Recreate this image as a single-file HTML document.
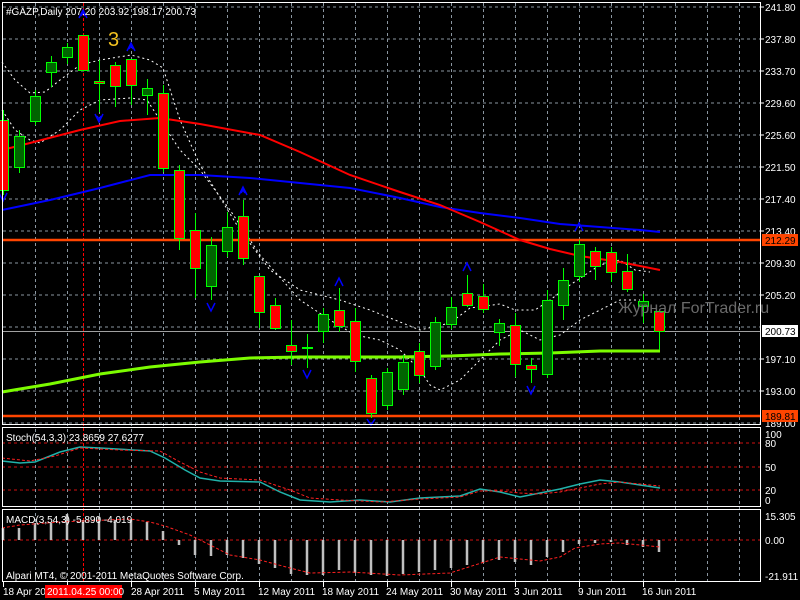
<!DOCTYPE html>
<html><head><meta charset="utf-8"><style>
body{margin:0;background:#000;width:800px;height:600px;overflow:hidden}
svg{display:block}
text{font-family:"Liberation Sans","DejaVu Sans",sans-serif;font-size:10px;fill:#fff}
</style></head><body>
<svg width="800" height="600" viewBox="0 0 800 600">
<g stroke="#8a96a0" stroke-dasharray="3,3" stroke-width="1">
<path d="M3 7H760M3 39H760M3 71H760M3 103H760M3 135H760M3 167H760M3 199H760M3 231H760M3 263H760M3 295H760M3 327H760M3 359H760M3 391H760M3 423H760"/>
<path d="M35.5 3V582M67.5 3V582M99.5 3V582M131.5 3V582M163.5 3V582M195.5 3V582M227.5 3V582M259.5 3V582M291.5 3V582M323.5 3V582M355.5 3V582M387.5 3V582M419.5 3V582M451.5 3V582M483.5 3V582M515.5 3V582M547.5 3V582M579.5 3V582M611.5 3V582M643.5 3V582M675.5 3V582M707.5 3V582M739.5 3V582"/>
</g>
<path d="M83.5 3V582" stroke="#ff0000" stroke-dasharray="3,2"/>
<path d="M2 240H760M2 416H760" stroke="#ff4500" stroke-width="2.5"/>
<path d="M2 331.5H760" stroke="#a0a0a0"/>
<g fill="none" stroke="#fff" stroke-dasharray="2,3">
<polyline points="2,62 15,80 30,93 45,92 60,80 80,65 100,60 131,55 150,60 163,68 180,120 200,165 240,230 270,270 300,290 340,300 355,305 370,310 400,322 420,330 450,323 470,308 485,306 500,304 515,310 535,310 550,300 570,285 600,265 620,260 635,270 650,272"/>
<polyline points="2,110 15,130 30,140 40,143 60,130 80,110 100,100 130,98 147,100 160,120 180,150 200,170 230,210 260,255 300,300 330,320 355,335 380,340 400,350 420,370 430,385 440,390 460,380 480,360 500,340 520,330 540,340 560,335 580,320 600,310 620,300 640,300"/>
</g>
<polyline fill="none" stroke="#0000ff" stroke-width="2" points="2,210 50,200 100,188 150,175 200,175 250,178 300,183 350,188 400,198 440,207 480,213 520,218 560,224 600,227 640,230 660,232"/>
<polyline fill="none" stroke="#ff0000" stroke-width="2" points="2,150 30,143 80,130 120,121 160,118 200,124 260,135 300,152 350,175 400,192 440,205 480,222 520,240 550,249 580,256 620,262 660,270"/>
<polyline fill="none" stroke="#7cfc00" stroke-width="3" points="2,392 50,384 100,374 150,367 200,362 250,358 300,357 350,357 400,357 450,356 500,354 550,353 600,351 640,351 660,351"/>
<path d="M659.5 351V331" stroke="#7cfc00"/>
<g stroke="#00ff00" stroke-width="1">
<path d="M3.5 110V195M19.5 130V173M35.5 90V125M51.5 56V87M67.5 43V64M83.5 35V70M99.5 60V112M115.5 62V107M131.5 59V105M147.5 79V115M163.5 85V172M179.5 165V250M195.5 213V298M211.5 237V300M227.5 212V257M243.5 200V265M259.5 276V328M275.5 298V330M291.5 320V365M307.5 334V368M323.5 308V343M339.5 288V332M355.5 308V372M371.5 375V418M387.5 368V410M403.5 355V395M419.5 343V383M435.5 317V370M451.5 297V329M467.5 275V307M483.5 284V313M499.5 319V346M515.5 313V377M531.5 358V383M547.5 290V378M563.5 268V320M579.5 240V282M595.5 247V280M611.5 247V282M627.5 254V292M643.5 294V323M659.5 311V350"/>
<g fill="#ff0000">
<rect x="-1.5" y="120.5" width="10" height="70"/><rect x="78.5" y="35.5" width="10" height="35"/><rect x="94.5" y="81.5" width="10" height="2"/><rect x="110.5" y="65.5" width="10" height="21"/><rect x="126.5" y="59.5" width="10" height="26"/><rect x="158.5" y="93.5" width="10" height="75"/><rect x="174.5" y="170.5" width="10" height="68"/><rect x="190.5" y="230.5" width="10" height="38"/><rect x="238.5" y="216.5" width="10" height="42"/><rect x="254.5" y="276.5" width="10" height="36"/><rect x="270.5" y="305.5" width="10" height="23"/><rect x="286.5" y="345.5" width="10" height="6"/><rect x="334.5" y="310.5" width="10" height="16"/><rect x="350.5" y="321.5" width="10" height="40"/><rect x="366.5" y="378.5" width="10" height="35"/><rect x="414.5" y="351.5" width="10" height="24"/><rect x="462.5" y="293.5" width="10" height="12"/><rect x="478.5" y="296.5" width="10" height="13"/><rect x="510.5" y="325.5" width="10" height="39"/><rect x="526.5" y="365.5" width="10" height="4"/><rect x="590.5" y="251.5" width="10" height="15"/><rect x="606.5" y="252.5" width="10" height="20"/><rect x="622.5" y="271.5" width="10" height="18"/><rect x="654.5" y="311.5" width="10" height="20"/>
</g>
<g fill="#006400">
<rect x="14.5" y="136.5" width="10" height="31"/><rect x="30.5" y="96.5" width="10" height="25"/><rect x="46.5" y="62.5" width="10" height="10"/><rect x="62.5" y="47.5" width="10" height="10"/><rect x="142.5" y="88.5" width="10" height="7"/><rect x="206.5" y="245.5" width="10" height="41"/><rect x="222.5" y="227.5" width="10" height="24"/><rect x="302.5" y="347.5" width="10" height="1"/><rect x="318.5" y="314.5" width="10" height="17"/><rect x="382.5" y="372.5" width="10" height="33"/><rect x="398.5" y="362.5" width="10" height="27"/><rect x="430.5" y="322.5" width="10" height="44"/><rect x="446.5" y="307.5" width="10" height="17"/><rect x="494.5" y="323.5" width="10" height="9"/><rect x="542.5" y="300.5" width="10" height="74"/><rect x="558.5" y="280.5" width="10" height="25"/><rect x="574.5" y="244.5" width="10" height="32"/><rect x="638.5" y="301.5" width="10" height="5"/>
</g></g>
<g fill="none" stroke="#0000ff" stroke-width="1.5">
<path d="M79 18L83 10L87 18M81 16L83 13L85 16"/><path d="M127 51L131 43L135 51M129 49L131 46L133 49"/><path d="M239 195L243 187L247 195M241 193L243 190L245 193"/><path d="M335 286L339 278L343 286"/><path d="M463 271L467 263L471 271"/><path d="M575 231L579 223L583 231"/>
<path d="M-1 193L3 201L7 193"/><path d="M95 114L99 122L103 114M97 116L99 119L101 116"/><path d="M207 303L211 311L215 303"/><path d="M303 370L307 378L311 370"/><path d="M367 419L371 425L375 419"/><path d="M527 386L531 394L535 386"/>
</g>
<text x="108" y="46" style="font-size:20px;fill:#f0c020">3</text>
<text x="618" y="313" style="font-size:16px;fill:#6a6a6a">Журнал ForTrader.ru</text>
<text x="6" y="15">#GAZP,Daily  207.20 203.92 198.17 200.73</text>
<path d="M2 443H760M2 467H760M2 490H760" stroke="#d01010" stroke-dasharray="3,3"/>
<polyline fill="none" stroke="#20b2aa" stroke-width="1.5" points="2,461 20,463 35,462 60,452 80,447 100,448 150,451 165,458 185,470 200,478 220,481 260,482 280,492 300,500 330,502 360,500 390,502 420,498 460,496 480,489 500,492 520,497 540,493 560,489 580,484 600,480 620,482 640,485 660,488"/>
<polyline fill="none" stroke="#ff2020" stroke-dasharray="3,2" points="2,458 30,461 55,456 80,448 120,450 160,451 180,462 200,472 220,478 260,480 290,490 310,498 340,500 380,502 420,499 460,497 480,491 500,491 520,493 540,494 560,492 580,488 600,484 620,482 640,484 660,486"/>
<text x="6" y="441">Stoch(54,3,3) 23.8659 27.6277</text>
<path d="M2 540H760" stroke="#d01010" stroke-dasharray="3,3"/>
<g stroke="#c0c0c0" stroke-width="2.5">
<path d="M3 540V528M19 540V528M35 540V523M51 540V523M67 540V514M83 540V520M99 540V517M115 540V520M131 540V520M147 540V522M163 540V531M179 540V545M195 540V555M211 540V556M227 540V555M243 540V558M259 540V564M275 540V568M291 540V574M307 540V575M323 540V575M339 540V570M355 540V573M371 540V575M387 540V576M403 540V574M419 540V572M435 540V570M451 540V568M467 540V565M483 540V563M499 540V560M515 540V562M531 540V565M547 540V557M563 540V552M579 540V544M595 540V543M611 540V542M627 540V545M643 540V547M659 540V552"/>
</g>
<polyline fill="none" stroke="#ff2020" stroke-dasharray="3,2" points="2,528 20,525 60,522 130,519 150,522 165,526 190,535 230,555 260,560 290,568 310,573 350,572 400,575 450,573 500,557 540,561 560,557 575,548 600,544 620,543 640,545 660,547"/>
<text x="6" y="523">MACD(3,54,3) -5.890 -4.019</text>
<text x="6" y="579">Alpari MT4, © 2001-2011 MetaQuotes Software Corp.</text>
<g fill="none" stroke="#fff" stroke-width="1">
<rect x="2.5" y="2.5" width="758" height="422"/><rect x="2.5" y="427.5" width="758" height="79"/><rect x="2.5" y="509.5" width="758" height="72"/>
</g>
<g>
<text x="765" y="11">241.80</text><text x="765" y="43">237.80</text><text x="765" y="75">233.70</text><text x="765" y="107">229.60</text><text x="765" y="139">225.60</text><text x="765" y="171">221.50</text><text x="765" y="203">217.40</text><text x="765" y="235">213.40</text><text x="765" y="267">209.30</text><text x="765" y="299">205.20</text><text x="765" y="363">197.10</text><text x="765" y="395">193.00</text><text x="765" y="427">189.00</text>
<text x="765" y="438">100</text><text x="765" y="447">80</text><text x="765" y="471">50</text><text x="765" y="494">20</text><text x="765" y="504">0</text>
<text x="765" y="520">15.305</text><text x="765" y="544">0.00</text><text x="765" y="580">-21.911</text>
</g>
<path d="M760 7H764M760 39H764M760 71H764M760 103H764M760 135H764M760 167H764M760 199H764M760 231H764M760 263H764M760 295H764M760 359H764M760 391H764" stroke="#fff"/>
<rect x="762" y="234" width="36" height="12" fill="#ff4500"/><text x="765" y="244" style="fill:#000">212.29</text>
<rect x="762" y="410" width="36" height="12" fill="#ff4500"/><text x="765" y="420" style="fill:#000">189.81</text>
<rect x="762" y="325" width="36" height="12" fill="#fff"/><text x="765" y="335" style="fill:#000">200.73</text>
<path d="M3.5 582V587M67.5 582V587M131.5 582V587M195.5 582V587M259.5 582V587M323.5 582V587M387.5 582V587M451.5 582V587M515.5 582V587M579.5 582V587M643.5 582V587" stroke="#fff"/>
<text x="3" y="595">18 Apr 20</text>
<rect x="45" y="585" width="77" height="13" fill="#ff0000"/><text x="47" y="595">2011.04.25 00:00</text>
<text x="131" y="595">28 Apr 2011</text><text x="194" y="595">5 May 2011</text><text x="258" y="595">12 May 2011</text><text x="322" y="595">18 May 2011</text><text x="386" y="595">24 May 2011</text><text x="450" y="595">30 May 2011</text><text x="514" y="595">3 Jun 2011</text><text x="578" y="595">9 Jun 2011</text><text x="642" y="595">16 Jun 2011</text>
</svg>
</body></html>
